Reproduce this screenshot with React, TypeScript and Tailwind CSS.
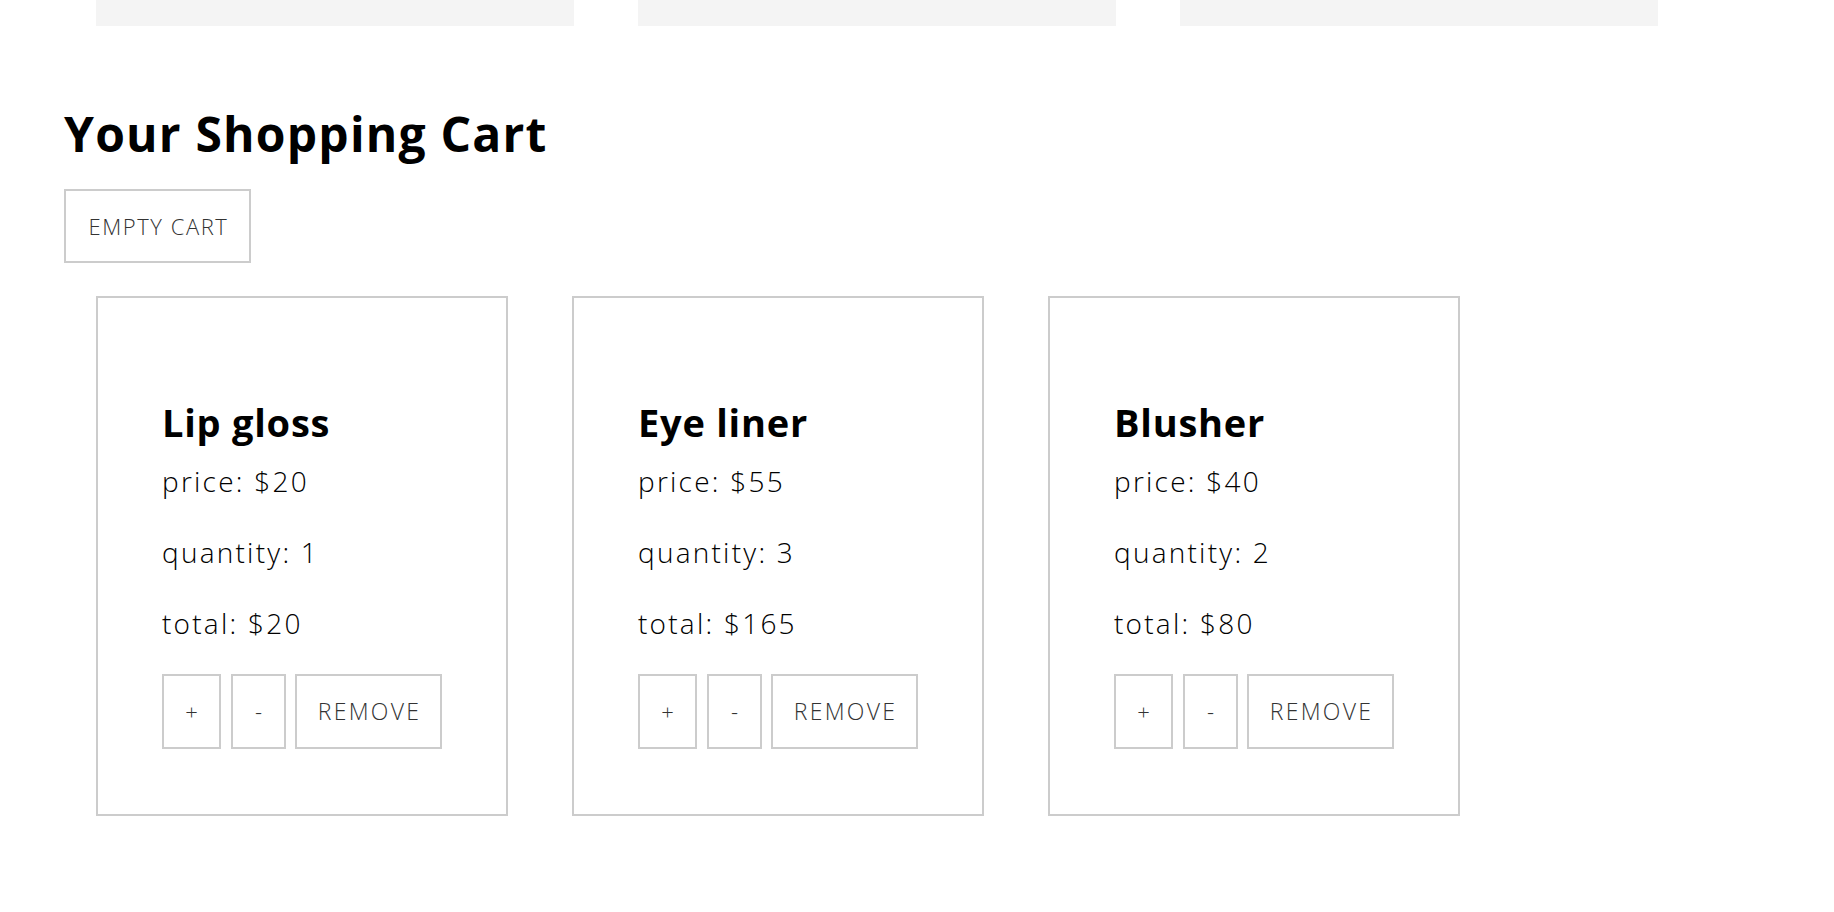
import React from "react";

const items = [
  { name: "Lip gloss", price: 20, qty: 1 },
  { name: "Eye liner", price: 55, qty: 3 },
  { name: "Blusher", price: 40, qty: 2 },
];

function CartCard({ name, price, qty }: { name: string; price: number; qty: number }) {
  return (
    <div className="flex h-[520px] w-[412px] flex-col border-2 border-[#cccccc] pl-[64px] pt-[101px]">
      <h2 className="h-[46px] text-[38px] font-bold leading-[46px] tracking-[0.02em] text-black">{name}</h2>
      <p className="mt-[19px] h-[34px] text-[28px] font-light leading-[34px] tracking-[0.08em] text-black">price: ${price}</p>
      <p className="mt-[37px] h-[34px] text-[28px] font-light leading-[34px] tracking-[0.08em] text-black">quantity: {qty}</p>
      <p className="mt-[37px] h-[34px] text-[28px] font-light leading-[34px] tracking-[0.08em] text-black">total: ${price * qty}</p>
      <div className="mt-[34px] flex">
        <button className="mr-[10px] flex h-[75px] w-[59px] items-center justify-center border-2 border-[#cccccc] bg-white text-[22px] font-light text-[#333333]">
          +
        </button>
        <button className="mr-[9px] flex h-[75px] w-[55px] items-center justify-center border-2 border-[#cccccc] bg-white text-[22px] font-light text-[#333333]">
          -
        </button>
        <button className="flex h-[75px] w-[147px] items-center justify-center border-2 border-[#cccccc] bg-white pl-[2px] text-[23px] font-light tracking-[0.1em] text-[#333333]">
          REMOVE
        </button>
      </div>
    </div>
  );
}

export default function App() {
  return (
    <div className="min-h-[912px] w-full bg-white font-['Open_Sans',sans-serif]">
      <div className="flex gap-[64px] pl-[96px]">
        <div className="h-[26px] w-[478px] bg-[#f4f4f4]" />
        <div className="h-[26px] w-[478px] bg-[#f4f4f4]" />
        <div className="h-[26px] w-[478px] bg-[#f4f4f4]" />
      </div>
      <div className="pl-[64px]">
        <h1 className="mt-[84px] h-[48px] text-[48px] font-bold leading-[48px] tracking-[0.025em] text-black">Your Shopping Cart</h1>
        <button className="mt-[31px] flex h-[74px] w-[187px] items-center justify-center border-2 border-[#cccccc] bg-white pl-[2px] text-[22px] font-light tracking-[0.07em] text-[#333333]">
          EMPTY CART
        </button>
        <div className="ml-[32px] mt-[33px] flex gap-[64px]">
          {items.map((it) => (
            <CartCard key={it.name} {...it} />
          ))}
        </div>
      </div>
    </div>
  );
}
